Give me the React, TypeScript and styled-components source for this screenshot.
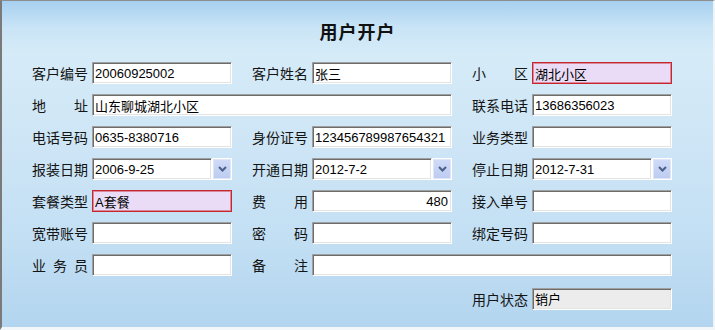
import React from "react";
import styled, { createGlobalStyle, css } from "styled-components";

const Global = createGlobalStyle`
  html, body { margin: 0; padding: 0; }
  body { font-family: "Noto Sans CJK SC", "Liberation Sans", sans-serif; }
`;

const Panel = styled.div`
  box-sizing: border-box;
  width: 715px;
  height: 330px;
  border-top: 1px solid #8e8e8e;
  border-left: 2px solid #7a7a7a;
  border-right: 2px solid #eef4f8;
  border-bottom: 3px solid #f4f7f9;
  background: linear-gradient(
    to bottom,
    #a7d0f0 0%,
    #c9e4f6 8%,
    #d5ebf8 16%,
    #cfe6f6 40%,
    #c4e0f4 70%,
    #b3d5ef 100%
  );
  display: flex;
  flex-direction: column;
`;

const Title = styled.h1`
  margin: 18px 0 0;
  height: 24px;
  line-height: 24px;
  text-align: center;
  font-size: 18px;
  font-weight: bold;
  letter-spacing: 1px;
  color: #111;
  font-family: "Noto Sans CJK SC", sans-serif;
`;

const Form = styled.div`
  margin-top: 19px;
  padding-left: 30px;
  display: grid;
  grid-template-columns: 200px 200px 200px;
  grid-auto-rows: 22px;
  column-gap: 20px;
  row-gap: 10px;
`;

const Field = styled.div<{ $col?: string; $shift?: number }>`
  display: flex;
  align-items: center;
  gap: 4px;
  ${(p) => p.$col && css`grid-column: ${p.$col};`}
  ${(p) => p.$shift && css`margin-top: ${p.$shift}px;`}
`;

const Label = styled.span`
  width: 56px;
  flex: none;
  display: flex;
  justify-content: space-between;
  font-size: 14px;
  line-height: 22px;
  color: #141414;
  font-family: "Noto Sans CJK SC", sans-serif;
`;

type Tone = "normal" | "alert" | "off";

const Input = styled.input<{ $tone?: Tone; $right?: boolean }>`
  box-sizing: border-box;
  flex: 1;
  min-width: 0;
  height: 22px;
  margin: 0;
  padding: 0 3px 0 2px;
  font-size: 13px;
  font-family: "Liberation Sans", "Noto Sans CJK SC", sans-serif;
  color: #000;
  outline: none;
  text-align: ${(p) => (p.$right ? "right" : "left")};
  border: 1px solid;
  border-color: #a0a0a0 #ffffff #ffffff #a0a0a0;
  box-shadow: inset 1px 1px 0 #6c6c6c, inset -1px -1px 0 #e3e3e3;
  background: #fff;
  ${(p) =>
    p.$tone === "alert" &&
    css`
      border-color: #c8262e;
      box-shadow: inset 0 0 0 1px #d98a9a;
      background: #eadcf7;
    `}
  ${(p) =>
    p.$tone === "off" &&
    css`
      background: #ececec;
    `}
`;

const DateBox = styled.div`
  flex: 1;
  display: flex;
  min-width: 0;
`;

const DropButton = styled.button`
  box-sizing: border-box;
  width: 20px;
  height: 22px;
  flex: none;
  margin: 0;
  padding: 0;
  border: 1px solid #ffffff;
  box-shadow: inset 0 0 0 1px #dfe6f8;
  background: linear-gradient(to bottom, #d0dbf7, #bccbf1);
  display: flex;
  align-items: center;
  justify-content: center;
`;

const Chevron = () => (
  <svg width="9" height="6" viewBox="0 0 9 6">
    <path d="M1 1 L4.5 4.5 L8 1" fill="none" stroke="#4a5f8a" strokeWidth="2" />
  </svg>
);

const LabelText = ({ text }: { text: string }) => (
  <Label>
    {Array.from(text).map((c, i) => (
      <span key={i}>{c}</span>
    ))}
  </Label>
);

type F = {
  label: string;
  value?: string;
  tone?: Tone;
  right?: boolean;
  date?: boolean;
  col?: string;
  shift?: number;
};

const fields: F[] = [
  { label: "客户编号", value: "20060925002" },
  { label: "客户姓名", value: "张三" },
  { label: "小区", value: "湖北小区", tone: "alert" },
  { label: "地址", value: "山东聊城湖北小区", col: "1 / 3" },
  { label: "联系电话", value: "13686356023" },
  { label: "电话号码", value: "0635-8380716" },
  { label: "身份证号", value: "123456789987654321" },
  { label: "业务类型" },
  { label: "报装日期", value: "2006-9-25", date: true },
  { label: "开通日期", value: "2012-7-2", date: true },
  { label: "停止日期", value: "2012-7-31", date: true },
  { label: "套餐类型", value: "A套餐", tone: "alert" },
  { label: "费用", value: "480", right: true },
  { label: "接入单号" },
  { label: "宽带账号" },
  { label: "密码" },
  { label: "绑定号码" },
  { label: "业务员" },
  { label: "备注", col: "2 / 4" },
  { label: "用户状态", value: "销户", tone: "off", col: "3", shift: 3 },
];

export default function App() {
  return (
    <>
      <Global />
      <Panel>
        <Title>用户开户</Title>
        <Form>
          {fields.map((f, i) => (
            <Field key={i} $col={f.col} $shift={f.shift}>
              <LabelText text={f.label} />
              {f.date ? (
                <DateBox>
                  <Input readOnly defaultValue={f.value ?? ""} />
                  <DropButton type="button">
                    <Chevron />
                  </DropButton>
                </DateBox>
              ) : (
                <Input
                  readOnly
                  defaultValue={f.value ?? ""}
                  $tone={f.tone}
                  $right={f.right}
                />
              )}
            </Field>
          ))}
        </Form>
      </Panel>
    </>
  );
}
